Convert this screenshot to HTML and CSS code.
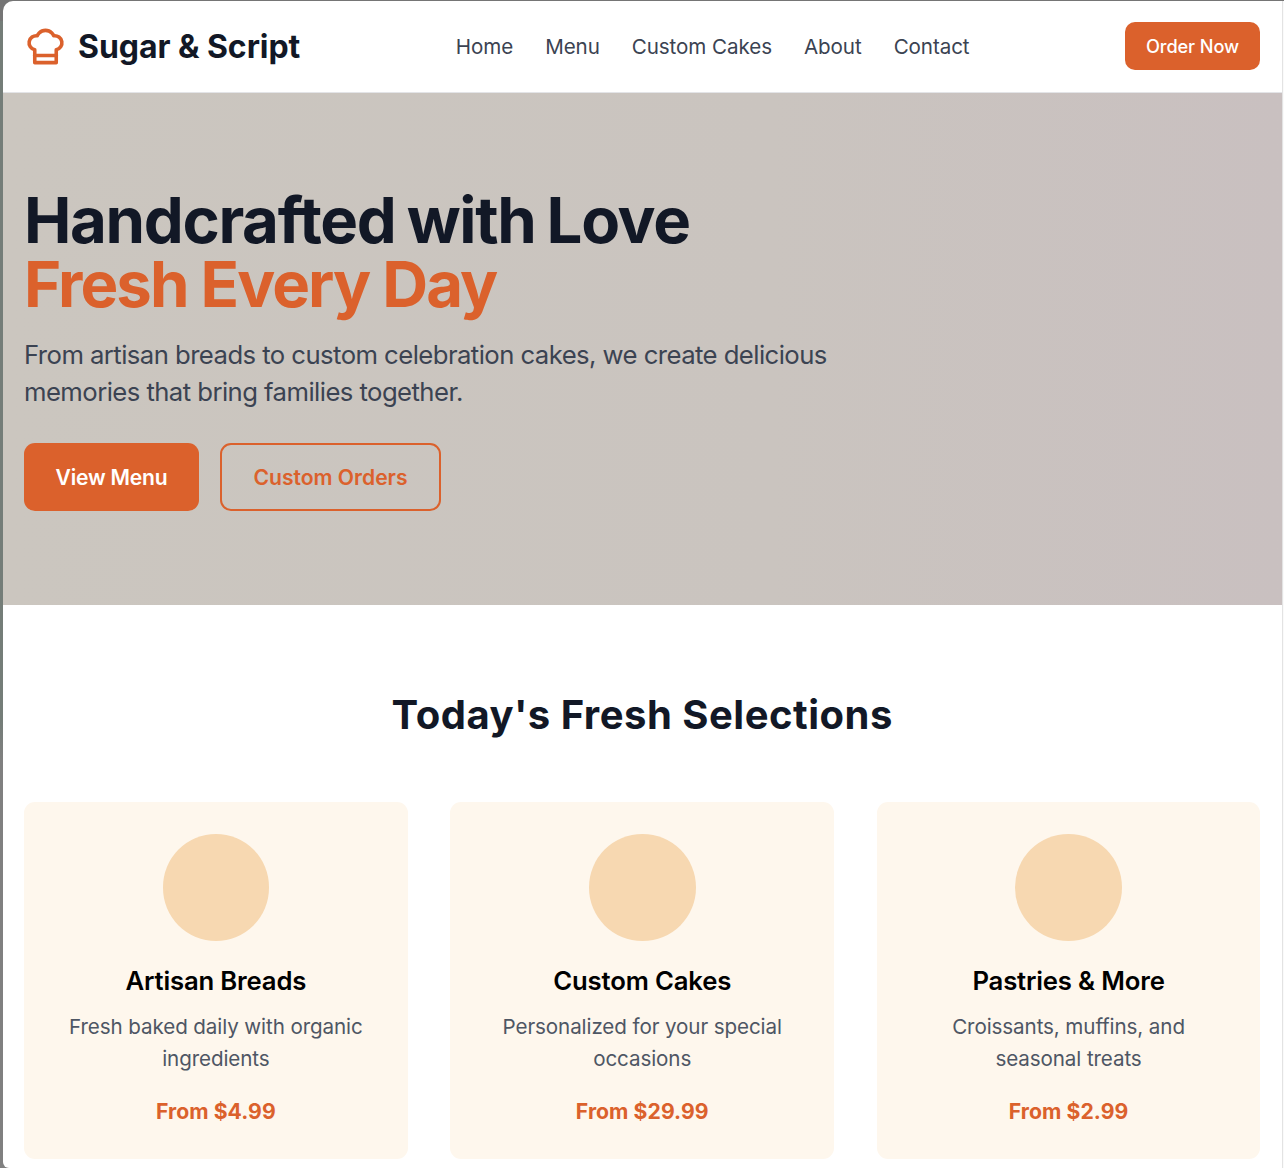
FILE: index.html
```html
<!DOCTYPE html>
<html lang="en">
<head>
<meta charset="utf-8">
<title>Sugar &amp; Script</title>
<link rel="stylesheet" href="styles.css">
</head>
<body>
<div class="page">
  <header class="header">
    <a class="brand" href="#">
      <svg class="brand-icon" viewBox="0 0 24 24" fill="none" stroke="currentColor" stroke-width="2" stroke-linecap="round" stroke-linejoin="round" aria-hidden="true">
        <path d="M6 13.87A4 4 0 0 1 7.41 6a5.11 5.11 0 0 1 1.05-1.54 5 5 0 0 1 7.08 0A5.11 5.11 0 0 1 16.59 6 4 4 0 0 1 18 13.87V21H6Z"/>
        <path d="M6 17h12"/>
      </svg>
      <span class="brand-name">Sugar &amp; Script</span>
    </a>
    <nav class="nav">
      <a href="#">Home</a>
      <a href="#">Menu</a>
      <a href="#">Custom Cakes</a>
      <a href="#">About</a>
      <a href="#">Contact</a>
    </nav>
    <button class="order">Order Now</button>
  </header>
  <section class="hero">
    <h1 class="hero-title"><span class="line">Handcrafted with Love</span><span class="line accent">Fresh Every Day</span></h1>
    <p class="hero-text">From artisan breads to custom celebration cakes, we create delicious memories that bring families together.</p>
    <div class="actions">
      <button class="button primary">View Menu</button>
      <button class="button outline">Custom Orders</button>
    </div>
  </section>
  <section class="selections">
    <h2 class="section-title">Today's Fresh Selections</h2>
    <div class="cards">
      <article class="card">
        <div class="dot"></div>
        <h3 class="card-title">Artisan Breads</h3>
        <p class="card-text">Fresh baked daily with organic ingredients</p>
        <p class="price">From $4.99</p>
      </article>
      <article class="card">
        <div class="dot"></div>
        <h3 class="card-title">Custom Cakes</h3>
        <p class="card-text">Personalized for your special occasions</p>
        <p class="price">From $29.99</p>
      </article>
      <article class="card">
        <div class="dot"></div>
        <h3 class="card-title">Pastries &amp; More</h3>
        <p class="card-text">Croissants, muffins, and seasonal treats</p>
        <p class="price">From $2.99</p>
      </article>
    </div>
  </section>
</div>
</body>
</html>
```
FILE: styles.css
```css
* { box-sizing: border-box; margin: 0; padding: 0; }
body {
  height: 1168px;
  overflow: hidden;
  padding: 1px 0 0 3px;
  background: linear-gradient(#757575 0 21px, #747d78 21px 720px, #808080 760px);
  font-family: Inter, "Liberation Sans", sans-serif;
  color: #000;
}
a { color: inherit; text-decoration: none; }
button { border: 0; font-family: inherit; }
.page {
  height: 1167px;
  overflow: hidden;
  padding-right: 1px;
  background: linear-gradient(to left, #fafafa 1px, #e3e3e3 1px 2px, #fff 2px);
  border-radius: 10px 0 0 6px;
}
.header {
  display: flex;
  justify-content: space-between;
  align-items: center;
  height: 92px;
  margin-right: 1px;
  padding: 0 22px 0 21px;
  border-bottom: 1px solid #e3e4e7;
}
.brand { display: flex; align-items: center; gap: 11px; }
.brand-icon { width: 43px; height: 43px; color: #db612c; }
.brand-name { font-size: 32px; font-weight: 700; letter-spacing: -0.05px; color: #121826; white-space: nowrap; }
.nav { display: flex; gap: 32px; font-size: 20.6px; letter-spacing: -0.08px; color: #3b4352; white-space: nowrap; }
.order {
  width: 135px;
  height: 48px;
  margin-bottom: 1px;
  border-radius: 10px;
  background: #db612c;
  color: #fff;
  font-size: 18.2px;
  font-weight: 500;
  letter-spacing: -0.1px;
}
.hero {
  height: 512px;
  margin-right: 1px;
  padding: 95px 21px 0;
  background: linear-gradient(to right, #cbc6bf, #cac4bf 60%, #c9c0c0);
}
.hero-title { font-size: 63.5px; line-height: 64px; font-weight: 700; letter-spacing: -1.35px; word-spacing: -2.5px; color: #121826; }
.line { display: block; }
.accent { color: #db612c; letter-spacing: -1.95px; word-spacing: 0; }
.hero-text { width: 853px; margin-top: 20px; font-size: 25.7px; line-height: 37.33px; letter-spacing: -0.56px; color: #3b4352; }
.actions { display: flex; gap: 21px; margin-top: 32px; }
.button { height: 68px; padding-top: 1px; border-radius: 11px; font-size: 21.1px; font-weight: 600; letter-spacing: -0.2px; }
.primary { width: 175px; background: #db612c; color: #fff; }
.outline { width: 221px; border: 2px solid #db612c; background: transparent; color: #db612c; letter-spacing: 0; }
.selections { padding: 86px 22.6px 0 21px; }
.section-title { text-align: center; font-size: 40px; line-height: 48px; font-weight: 700; letter-spacing: 0.5px; color: #121826; }
.cards { display: grid; grid-template-columns: repeat(3, 1fr); gap: 42.67px; margin-top: 63px; }
.card { height: 357px; padding: 32px; border-radius: 11px; background: #fef7ed; text-align: center; }
.dot { width: 106.67px; height: 106.67px; margin: 0 auto 21.33px; border-radius: 50%; background: #f7d8b1; }
.card-title { font-size: 25.7px; line-height: 37.33px; font-weight: 600; letter-spacing: -0.17px; }
.card-text { margin-top: 12px; font-size: 20.6px; line-height: 32px; letter-spacing: -0.1px; color: #4e5664; }
.price { margin-top: 20px; font-size: 21.2px; line-height: 32px; font-weight: 700; letter-spacing: 0.05px; color: #db612c; }
```
